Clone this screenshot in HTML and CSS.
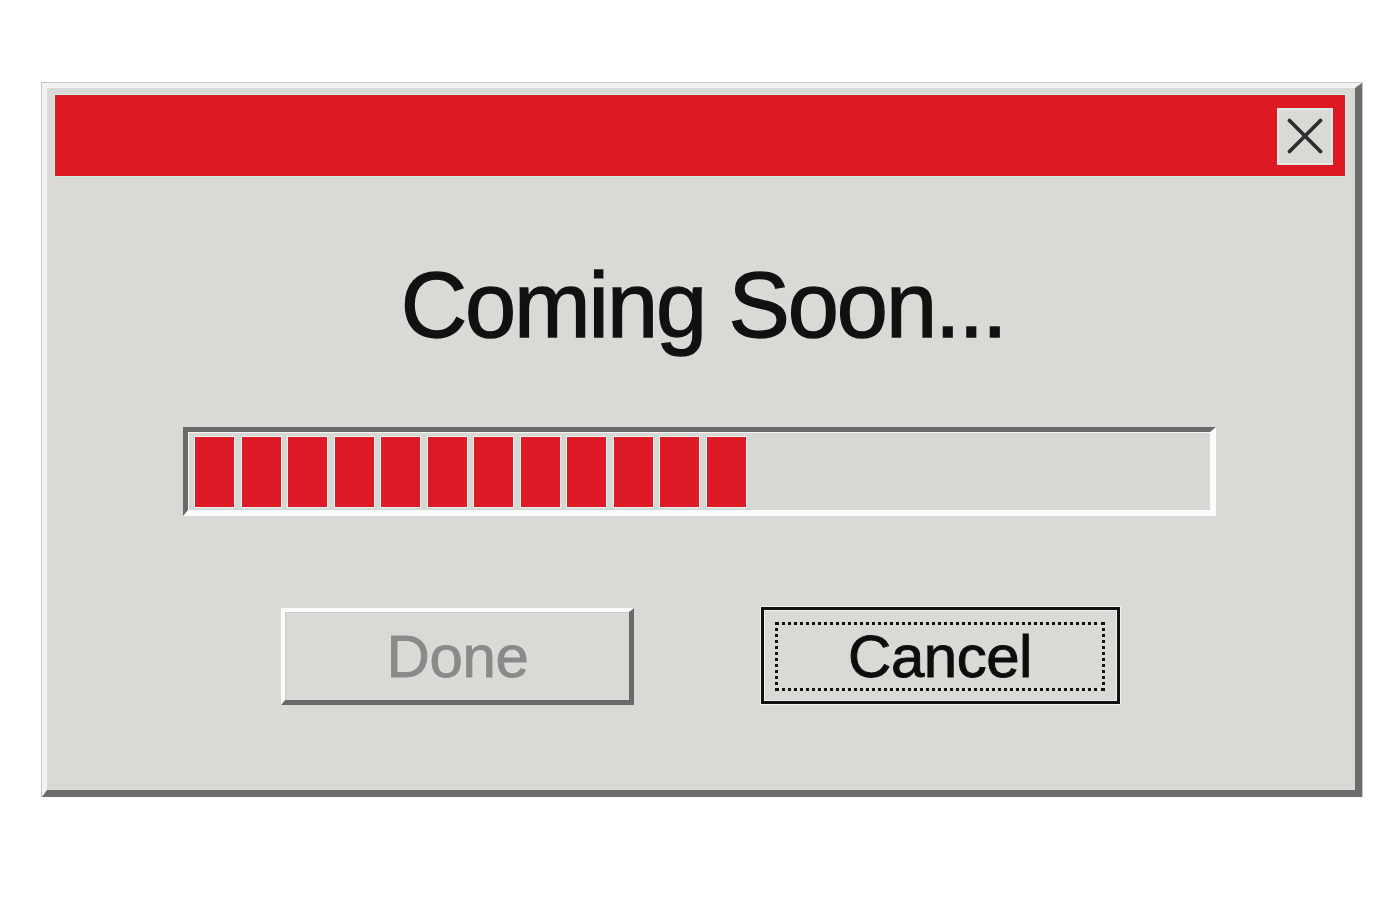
FILE: index.html
```html
<!DOCTYPE html>
<html lang="en">
<head>
<meta charset="utf-8">
<title>Coming Soon</title>
<link rel="stylesheet" href="styles.css">
</head>
<body>
<div class="window">
  <div class="titlebar">
    <button class="close" aria-label="Close">
      <svg width="36" height="36" viewBox="0 0 36 36"><path d="M2.5 2.5 L33.5 33.5 M33.5 2.5 L2.5 33.5" stroke="#2e2e2e" stroke-width="3.8" stroke-linecap="round" fill="none"/></svg>
    </button>
  </div>
  <h1 class="heading">Coming Soon...</h1>
  <div class="progress">
    <span class="block"></span><span class="block"></span><span class="block"></span><span class="block"></span>
    <span class="block"></span><span class="block"></span><span class="block"></span><span class="block"></span>
    <span class="block"></span><span class="block"></span><span class="block"></span><span class="block"></span>
  </div>
  <div class="buttons">
    <button class="btn btn-done">Done</button>
    <button class="btn btn-cancel"><span class="focus">Cancel</span></button>
  </div>
</div>
</body>
</html>
```
FILE: styles.css
```css
html, body {
  margin: 0;
  padding: 0;
  background: #ffffff;
}
body {
  padding: 83px 0 0 42px;
  font-family: "Liberation Sans", Arial, sans-serif;
}
.window {
  box-sizing: border-box;
  width: 1320px;
  background: #d9d9d5;
  border-top: 5px solid #f2f2f0;
  border-left: 5px solid #f2f2f0;
  border-right: 7px solid #6c6c6c;
  border-bottom: 7px solid #6c6c6c;
  box-shadow: 0 0 0 1px #c9c9c6;
  padding: 7px 10px 85px 8px;
  display: flex;
  flex-direction: column;
  align-items: center;
}
.titlebar {
  box-sizing: border-box;
  align-self: stretch;
  height: 81px;
  background: #dd1a23;
  box-shadow: 0 0 0 1px #d3ebe7;
  display: flex;
  justify-content: flex-end;
  align-items: center;
  padding-right: 12px;
}
.close {
  box-sizing: border-box;
  width: 56px;
  height: 57px;
  margin-top: 1px;
  padding: 0;
  background: #d9d9d5;
  border: 1px solid #d3ebe7;
  box-shadow: inset 0 0 0 1px #e6e6e3;
  display: flex;
  align-items: center;
  justify-content: center;
}
.heading {
  margin: 83px 0 0 6px;
  font-size: 92px;
  line-height: 92px;
  font-weight: 400;
  letter-spacing: -2.1px;
  color: #111111;
  -webkit-text-stroke: 1.4px #111111;
  text-shadow: 0 0 2px #ffffff;
}
.progress {
  box-sizing: border-box;
  width: 1033px;
  height: 89px;
  margin: 76px 0 0 -1px;
  border-top: 5px solid #6a6a6a;
  border-left: 5px solid #6a6a6a;
  border-bottom: 6px solid #fbfbfb;
  border-right: 6px solid #fbfbfb;
  box-shadow: inset 1px 1px 0 #f3f8f6;
  background: #d7d7d3;
  padding: 5px 7px 3px 7px;
  display: flex;
  gap: 7.5px;
}
.block {
  width: 39px;
  height: 70px;
  background: #dd1a25;
  box-shadow: 0 0 0 1px #e9f4f1;
}
.buttons {
  margin-top: 92px;
  display: flex;
  gap: 127px;
  align-items: flex-start;
}
.btn {
  box-sizing: border-box;
  height: 97px;
  padding: 0;
  font-family: "Liberation Sans", Arial, sans-serif;
  font-size: 60px;
  background: #d9d9d5;
  display: flex;
  align-items: center;
  justify-content: center;
}
.btn-done {
  width: 353px;
  border-top: 4px solid #fcfcfc;
  border-left: 4px solid #fcfcfc;
  border-right: 5px solid #6a6a6a;
  border-bottom: 5px solid #6a6a6a;
  box-shadow: inset 1px 1px 0 #c9c9c6;
  color: #8a8a8a;
  -webkit-text-stroke: 0.9px #8a8a8a;
  text-shadow: 0 0 2px #f4f4f2;
  padding-left: 2px;
  letter-spacing: -0.3px;
}
.btn-cancel {
  width: 359px;
  margin-top: -1px;
  border: 3px solid #111111;
  box-shadow: 0 0 0 1px #f2f2f0, inset 0 0 0 1px #f2f2f0;
  padding: 12px 12px 10px 11px;
  color: #0c0c0c;
  align-items: stretch;
  justify-content: stretch;
}
.focus {
  flex: 1;
  border: 3px dotted #111111;
  display: flex;
  align-items: center;
  justify-content: center;
  padding-left: 1px;
  -webkit-text-stroke: 0.9px #0c0c0c;
  letter-spacing: -0.5px;
}
```
